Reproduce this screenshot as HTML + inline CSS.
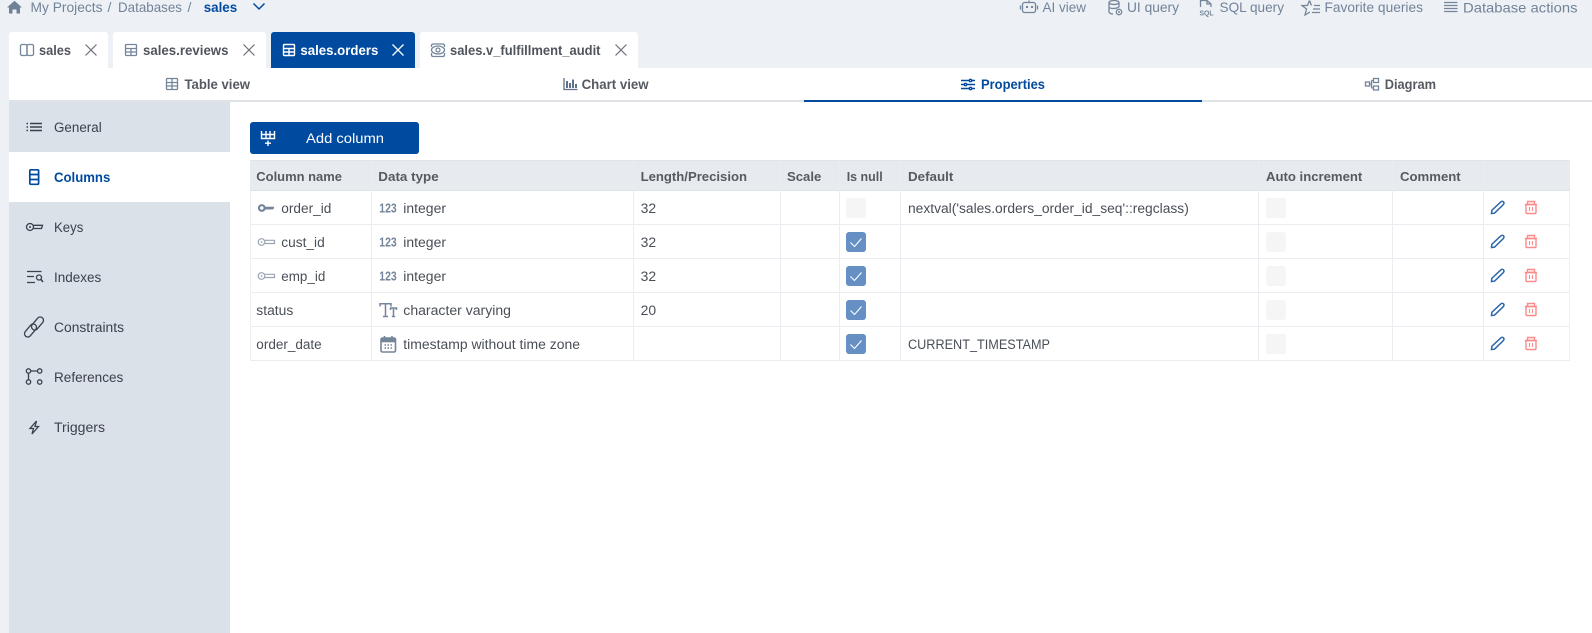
<!DOCTYPE html>
<html lang="en"><head><meta charset="utf-8"><title>sales.orders</title>
<style>
html,body{margin:0;padding:0;background:#fff;width:1592px;height:633px;overflow:hidden}
svg{display:block}
text{font-family:"Liberation Sans",sans-serif;font-size:13.5px;fill:#40454d}
.top{font-size:14px;fill:#728399}
.tab{font-size:13.5px;font-weight:700;fill:#50555d;stroke:none}
.sub{font-size:13.5px;font-weight:700;fill:#555a62}
.side{font-size:13.5px;fill:#3b414b}
.th{font-size:13px;font-weight:700;fill:#565b63}
.td{font-size:13.5px;fill:#4a4f57}
.n{font-size:12.5px;font-weight:700;fill:#74859a}
.ic{fill:none;stroke:#74859a;stroke-width:1.3}
.bl{fill:none;stroke:#2c68ad;stroke-width:1.5}
.rd{fill:none;stroke:#fb8a8a;stroke-width:1.4}
.gk{fill:none;stroke:#9aa5b3;stroke-width:1.2}
.ck{fill:none;stroke:#fff;stroke-width:1.1}
.sd{fill:none;stroke:#3b414b;stroke-width:1.3}
</style></head><body>
<svg width="1592" height="633" viewBox="0 0 1592 633" xmlns="http://www.w3.org/2000/svg">
<rect width="1592" height="633" fill="#fff"/>
<rect width="1592" height="68" fill="#edf1f5"/>
<rect y="68" width="9" height="565" fill="#edf1f5"/>

<!-- breadcrumb -->
<path d="M7 7.500 14.500 .8 22 7.500H20V13.500H16.500V9.500H12.500V13.500H9V7.500Z" fill="#6f8197"/>
<text class="top" x="30.500" y="12" textLength="72" lengthAdjust="spacingAndGlyphs">My Projects</text>
<text class="top" x="107.500" y="12">/</text>
<text class="top" x="118" y="12" textLength="64" lengthAdjust="spacingAndGlyphs">Databases</text>
<text class="top" x="187.500" y="12">/</text>
<text x="203.700" y="12" textLength="33.500" lengthAdjust="spacingAndGlyphs" style="font-size:14px;font-weight:700;fill:#004a9f">sales</text>
<path d="M253.500 3.500 259 9 264.500 3.500" fill="none" stroke="#004a9f" stroke-width="1.500"/>

<!-- top right -->
<g class="ic">
<rect x="1022.500" y="2.500" width="13" height="10" rx="2"/><path d="M1029 2.500V.5M1020.500 5.500V9.500M1037.500 5.500V9.500"/>
</g>
<rect x="1026" y="6" width="2" height="2" fill="#74859a"/><rect x="1031" y="6" width="2" height="2" fill="#74859a"/>
<text class="top" x="1042.500" y="12" textLength="43.500" lengthAdjust="spacingAndGlyphs">AI view</text>
<g class="ic">
<ellipse cx="1114" cy="2.500" rx="5" ry="2"/><path d="M1109 2.500V12C1109 13 1111 14 1113 14M1119 2.500V7M1109 7C1110 9 1116 9 1119 7"/>
<circle cx="1119" cy="12" r="2.700"/>
</g>
<circle cx="1119" cy="12" r="1" fill="#74859a"/>
<text class="top" x="1127" y="12" textLength="52" lengthAdjust="spacingAndGlyphs">UI query</text>
<path class="ic" d="M1200.500 7V.5H1207L1211 4V7M1207 .5V4H1211"/>
<text x="1199.500" y="15.500" textLength="14" lengthAdjust="spacingAndGlyphs" style="font-size:7px;font-weight:700;fill:#74859a">SQL</text>
<text class="top" x="1219.500" y="12" textLength="64.500" lengthAdjust="spacingAndGlyphs">SQL query</text>
<path class="ic" d="M1309.500 .5 1311.500 5.500M1309.500 .5 1307.500 5.500H1302L1306.500 9 1305 15 1310 12M1314 5.500H1320M1313 9H1320M1312 12.500H1320"/>
<text class="top" x="1324.500" y="12" textLength="98.500" lengthAdjust="spacingAndGlyphs">Favorite queries</text>
<path class="ic" d="M1444 2.500H1457.500M1444 5.500H1457.500M1444 8.500H1457.500M1444 11.500H1457.500"/>
<text class="top" x="1463" y="12.500" textLength="114.500" lengthAdjust="spacingAndGlyphs">Database actions</text>

<!-- tabs -->
<path d="M9 68V35a3 3 0 0 1 3-3H105a3 3 0 0 1 3 3V68Z" fill="#fff"/>
<path d="M113 68V35a3 3 0 0 1 3-3H263a3 3 0 0 1 3 3V68Z" fill="#fff"/>
<path d="M271 68V35a3 3 0 0 1 3-3H412a3 3 0 0 1 3 3V68Z" fill="#004a9f"/>
<path d="M420 68V35a3 3 0 0 1 3-3H635a3 3 0 0 1 3 3V68Z" fill="#fff"/>

<g class="ic"><rect x="20.500" y="44.500" width="6.500" height="11" rx="1.500"/><rect x="27" y="44.500" width="6.500" height="11" rx="1.500"/></g>
<text class="tab" x="39" y="55" textLength="32" lengthAdjust="spacingAndGlyphs">sales</text>
<path d="M85.500 44.500 96.500 55.500M96.500 44.500 85.500 55.500" stroke="#6a6f76" stroke-width="1.200"/>

<g class="ic"><rect x="125.500" y="44.500" width="11" height="11" rx="1"/><path d="M125.500 48.500H136.500M125.500 52H136.500M131 48.500V55.500"/></g>
<text class="tab" x="143" y="55" textLength="85.500" lengthAdjust="spacingAndGlyphs">sales.reviews</text>
<path d="M243.500 44.500 254.500 55.500M254.500 44.500 243.500 55.500" stroke="#6a6f76" stroke-width="1.200"/>

<g fill="none" stroke="#fff" stroke-width="1.400"><rect x="283.500" y="44.500" width="11" height="11" rx="1"/><path d="M283.500 48.500H294.500M283.500 52H294.500M289 48.500V55.500"/></g>
<text class="tab" x="300.400" y="55" textLength="78" lengthAdjust="spacingAndGlyphs" style="fill:#fff">sales.orders</text>
<path d="M392.500 44.500 403.500 55.500M403.500 44.500 392.500 55.500" stroke="#fff" stroke-width="1.300"/>

<g class="ic"><path d="M431.500 47V45.500C431.500 44.500 432.500 44 433.500 44H442.500C443.500 44 444.500 44.500 444.500 45.500V47M431.500 53V55C431.500 56 432.500 56.500 433.500 56.500H442.500C443.500 56.500 444.500 56 444.500 55V53"/><ellipse cx="438" cy="50" rx="6.500" ry="4"/><circle cx="438" cy="50" r="2"/></g>
<text class="tab" x="450" y="55" textLength="150.500" lengthAdjust="spacingAndGlyphs">sales.v_fulfillment_audit</text>
<path d="M615.500 44.500 626.500 55.500M626.500 44.500 615.500 55.500" stroke="#6a6f76" stroke-width="1.200"/>

<!-- sub nav -->
<rect x="9" y="100" width="1583" height="2" fill="#dfe2e7"/>
<rect x="804" y="100" width="398" height="2" fill="#004a9f"/>
<g class="ic"><rect x="166.500" y="78.500" width="11" height="11" rx="1"/><path d="M166.500 82.500H177.500M166.500 86H177.500M172 78.500V89.500"/></g>
<text class="sub" x="184.500" y="89" textLength="65.500" lengthAdjust="spacingAndGlyphs">Table view</text>
<path d="M564 78V89.500H577.500" fill="none" stroke="#5f7189" stroke-width="1.300"/>
<path d="M567 81V88M570 83V88M573 79.500V88M576 84V88" fill="none" stroke="#5f7189" stroke-width="2"/>
<text class="sub" x="581.600" y="89" textLength="67" lengthAdjust="spacingAndGlyphs">Chart view</text>
<g fill="none" stroke="#004a9f" stroke-width="1.400"><path d="M961 80.500H969M972 80.500H975M961 84.500H964M967 84.500H975M961 88.500H969M972 88.500H975"/><circle cx="970.500" cy="80.500" r="1.200"/><circle cx="965.500" cy="84.500" r="1.200"/><circle cx="970.500" cy="88.500" r="1.200"/></g>
<text x="981" y="89" textLength="64" lengthAdjust="spacingAndGlyphs" style="font-size:13.5px;font-weight:700;fill:#004a9f">Properties</text>
<g class="ic"><rect x="1365.500" y="82" width="4" height="4"/><rect x="1373.500" y="78.500" width="5" height="4"/><rect x="1373.500" y="86" width="5" height="4"/><path d="M1369.500 84H1371.500M1371.500 80.500V88M1371.500 80.500H1373.500M1371.500 88H1373.500"/></g>
<text class="sub" x="1384.700" y="89" textLength="51.300" lengthAdjust="spacingAndGlyphs">Diagram</text>

<!-- sidebar -->
<rect x="9" y="102" width="221" height="531" fill="#dbe1e8"/>
<rect x="9" y="152" width="221" height="50" fill="#fff"/>
<path d="M26.500 123.500H28M30 123.500H42M26.500 127H28M30 127H42M26.500 130.500H28M30 130.500H42" fill="none" stroke="#3b414b" stroke-width="1.600"/>
<text class="side" x="54" y="132" textLength="47.700" lengthAdjust="spacingAndGlyphs">General</text>
<g fill="none" stroke="#004a9f" stroke-width="1.700"><rect x="29.800" y="169.800" width="8.800" height="14.500" rx="1"/><path d="M29.800 174.500H38.600M29.800 179.500H38.600"/></g>
<text x="54" y="182" textLength="56.300" lengthAdjust="spacingAndGlyphs" style="font-size:13.5px;font-weight:700;fill:#004a9f">Columns</text>
<g class="sd"><circle cx="30" cy="227" r="3.500"/><path d="M33.500 225.300H42.500L41.500 228.500H33.500"/></g><circle cx="30" cy="227" r="1" fill="#3b414b"/>
<text class="side" x="54" y="232" textLength="29.300" lengthAdjust="spacingAndGlyphs">Keys</text>
<g class="sd"><path d="M27 271.500H41.500M27 276.500H34M27 282.500H35"/><circle cx="39" cy="277.500" r="2.500"/><path d="M41 279.500 43 282" stroke-width="1.600"/></g>
<text class="side" x="54" y="282" textLength="47.300" lengthAdjust="spacingAndGlyphs">Indexes</text>
<g class="sd"><rect x="-7.500" y="-3.300" width="15" height="6.600" rx="3.300" transform="translate(30.500 330.500) rotate(-50)"/><rect x="-7.500" y="-3.300" width="15" height="6.600" rx="3.300" transform="translate(37.500 323.500) rotate(-50)"/></g>
<text class="side" x="54" y="332" textLength="70" lengthAdjust="spacingAndGlyphs">Constraints</text>
<g class="sd"><circle cx="28.500" cy="371" r="2.200"/><circle cx="39.700" cy="371" r="2.200"/><circle cx="28.500" cy="382" r="2.200"/><circle cx="39.700" cy="382" r="2.200"/><path d="M30.700 371H37.500M28.500 373.200V379.800"/></g>
<text class="side" x="54" y="382" textLength="69.300" lengthAdjust="spacingAndGlyphs">References</text>
<path class="sd" d="M36.500 421 30 428.500H33.500L32 434 38.500 426.500H35Z" style="fill:none"/>
<text class="side" x="54" y="432" textLength="51" lengthAdjust="spacingAndGlyphs">Triggers</text>

<!-- add column -->
<rect x="250" y="122" width="169" height="32" rx="3" fill="#004a9f"/>
<path d="M261.500 131V138.500H274.500V131M261.500 134.500H274.500M266 131V138.500M270 131V138.500M268 140.500V146M265 143.200H271" fill="none" stroke="#fff" stroke-width="1.400"/>
<text x="306" y="143" textLength="78" lengthAdjust="spacingAndGlyphs" style="font-size:14px;fill:#fff;font-weight:400">Add column</text>

<!-- table -->
<rect x="250" y="160" width="1320" height="31" fill="#e7eaee"/>
<g fill="#e9ecf0">
<rect x="250" y="224" width="1320" height="1"/><rect x="250" y="258" width="1320" height="1"/><rect x="250" y="292" width="1320" height="1"/><rect x="250" y="326" width="1320" height="1"/><rect x="250" y="360" width="1320" height="1"/>
</g>
<rect x="250" y="160" width="1320" height="1" fill="#e0e4e9"/><rect x="250" y="190" width="1320" height="1" fill="#e0e4e9"/>
<g fill="#e9ecf0">
<rect x="371" y="160" width="1" height="201"/><rect x="633" y="160" width="1" height="201"/><rect x="780" y="160" width="1" height="201"/><rect x="839" y="160" width="1" height="201"/><rect x="900" y="160" width="1" height="201"/><rect x="1258" y="160" width="1" height="201"/><rect x="1392" y="160" width="1" height="201"/><rect x="1483" y="160" width="1" height="201"/>
</g>
<rect x="250" y="191" width="1" height="170" fill="#eef0f3"/><rect x="1569" y="191" width="1" height="170" fill="#eef0f3"/>
<text class="th" x="256.300" y="181" textLength="85.700" lengthAdjust="spacingAndGlyphs">Column name</text>
<text class="th" x="378.300" y="181" textLength="60.400" lengthAdjust="spacingAndGlyphs">Data type</text>
<text class="th" x="640.600" y="181" textLength="106.400" lengthAdjust="spacingAndGlyphs">Length/Precision</text>
<text class="th" x="787" y="181" textLength="34.300" lengthAdjust="spacingAndGlyphs">Scale</text>
<text class="th" x="846.700" y="181" textLength="36" lengthAdjust="spacingAndGlyphs">Is null</text>
<text class="th" x="908" y="181" textLength="45.300" lengthAdjust="spacingAndGlyphs">Default</text>
<text class="th" x="1266" y="181" textLength="96.300" lengthAdjust="spacingAndGlyphs">Auto increment</text>
<text class="th" x="1400" y="181" textLength="60.700" lengthAdjust="spacingAndGlyphs">Comment</text>

<!-- row 1 -->
<circle cx="261.800" cy="208" r="2.800" fill="none" stroke="#74859a" stroke-width="2.200"/><path d="M265 206.800H274V208.500L272.500 209.500H265Z" fill="#74859a"/>
<text class="td" x="281.300" y="213" textLength="50" lengthAdjust="spacingAndGlyphs">order_id</text>
<text class="n" x="379.300" y="212.700" textLength="17.400" lengthAdjust="spacingAndGlyphs">123</text>
<text class="td" x="403.300" y="213" textLength="42.700" lengthAdjust="spacingAndGlyphs">integer</text>
<text class="td" x="640.600" y="213" textLength="15.500" lengthAdjust="spacingAndGlyphs">32</text>
<rect x="846" y="198" width="20" height="20" rx="3" fill="#f5f5f5"/>
<text class="td" x="908" y="213" textLength="280.800" lengthAdjust="spacingAndGlyphs">nextval('sales.orders_order_id_seq'::regclass)</text>
<rect x="1266" y="198" width="20" height="20" rx="3" fill="#f5f5f5"/>

<!-- row 2 -->
<g class="gk"><circle cx="261.500" cy="242" r="3.300"/><path d="M264.800 240.300H274.500V243.500H264.800"/></g><circle cx="261.500" cy="242" r=".9" fill="#9aa5b3"/>
<text class="td" x="281.300" y="247" textLength="43.400" lengthAdjust="spacingAndGlyphs">cust_id</text>
<text class="n" x="379.300" y="246.700" textLength="17.400" lengthAdjust="spacingAndGlyphs">123</text>
<text class="td" x="403.300" y="247" textLength="42.700" lengthAdjust="spacingAndGlyphs">integer</text>
<text class="td" x="640.600" y="247" textLength="15.500" lengthAdjust="spacingAndGlyphs">32</text>
<rect x="846" y="232" width="20" height="20" rx="3" fill="#6690c4"/><path class="ck" d="M850.500 242.500 854.500 246.500 861.500 238.500"/>
<rect x="1266" y="232" width="20" height="20" rx="3" fill="#f5f5f5"/>

<!-- row 3 -->
<g class="gk"><circle cx="261.500" cy="276" r="3.300"/><path d="M264.800 274.300H274.500V277.500H264.800"/></g><circle cx="261.500" cy="276" r=".9" fill="#9aa5b3"/>
<text class="td" x="281.300" y="281" textLength="44" lengthAdjust="spacingAndGlyphs">emp_id</text>
<text class="n" x="379.300" y="280.700" textLength="17.400" lengthAdjust="spacingAndGlyphs">123</text>
<text class="td" x="403.300" y="281" textLength="42.700" lengthAdjust="spacingAndGlyphs">integer</text>
<text class="td" x="640.600" y="281" textLength="15.500" lengthAdjust="spacingAndGlyphs">32</text>
<rect x="846" y="266" width="20" height="20" rx="3" fill="#6690c4"/><path class="ck" d="M850.500 276.500 854.500 280.500 861.500 272.500"/>
<rect x="1266" y="266" width="20" height="20" rx="3" fill="#f5f5f5"/>

<!-- row 4 -->
<text class="td" x="256.300" y="315" textLength="37" lengthAdjust="spacingAndGlyphs">status</text>
<path d="M380 306.500V303.700H391V306.500M385.500 303.700V316.500M383 316.500H388M390.500 310V308H396.500V310M393.500 308V316.500M391.800 316.500H395.200" fill="none" stroke="#74859a" stroke-width="1.500"/>
<text class="td" x="403.300" y="315" textLength="107.700" lengthAdjust="spacingAndGlyphs">character varying</text>
<text class="td" x="640.600" y="315" textLength="15.500" lengthAdjust="spacingAndGlyphs">20</text>
<rect x="846" y="300" width="20" height="20" rx="3" fill="#6690c4"/><path class="ck" d="M850.500 310.500 854.500 314.500 861.500 306.500"/>
<rect x="1266" y="300" width="20" height="20" rx="3" fill="#f5f5f5"/>

<!-- row 5 -->
<text class="td" x="256.300" y="349" textLength="65.400" lengthAdjust="spacingAndGlyphs">order_date</text>
<rect x="381" y="338" width="14.500" height="4.300" fill="#74859a"/>
<g fill="none" stroke="#74859a" stroke-width="1.600"><rect x="381" y="338" width="14.500" height="14" rx="1.500"/><path d="M384.500 336V339.500M392 336V339.500"/></g>
<path d="M384.500 345H386M387.500 345H389M390.500 345H392M384.500 348H386M387.500 348H389M390.500 348H392" stroke="#74859a" stroke-width="1.400"/>
<text class="td" x="403.300" y="349" textLength="176.700" lengthAdjust="spacingAndGlyphs">timestamp without time zone</text>
<rect x="846" y="334" width="20" height="20" rx="3" fill="#6690c4"/><path class="ck" d="M850.500 344.500 854.500 348.500 861.500 340.500"/>
<text class="td" x="908" y="349" textLength="142" lengthAdjust="spacingAndGlyphs">CURRENT_TIMESTAMP</text>
<rect x="1266" y="334" width="20" height="20" rx="3" fill="#f5f5f5"/>

<!-- actions -->
<g class="bl">
<path d="M1491.500 213.500 1491.800 210.300 1500.800 201.900C1501.800 201 1503 201.200 1503.600 202C1504.200 202.800 1504 203.800 1503.200 204.700L1494.500 213.200Z"/>
<path d="M1491.500 247.500 1491.800 244.300 1500.800 235.900C1501.800 235 1503 235.200 1503.600 236C1504.200 236.800 1504 237.800 1503.200 238.700L1494.500 247.200Z"/>
<path d="M1491.500 281.500 1491.800 278.300 1500.800 269.900C1501.800 269 1503 269.200 1503.600 270C1504.200 270.800 1504 271.800 1503.200 272.700L1494.500 281.200Z"/>
<path d="M1491.500 315.500 1491.800 312.300 1500.800 303.900C1501.800 303 1503 303.200 1503.600 304C1504.200 304.800 1504 305.800 1503.200 306.700L1494.500 315.200Z"/>
<path d="M1491.500 349.500 1491.800 346.300 1500.800 337.900C1501.800 337 1503 337.200 1503.600 338C1504.200 338.800 1504 339.800 1503.200 340.700L1494.500 349.200Z"/>
</g>
<g class="rd">
<path d="M1524.800 204.500H1537M1527.500 204.500V201.500H1534.500V204.500"/><rect x="1526" y="204.500" width="10" height="9" rx="1"/><path d="M1529.500 207V211M1532.500 207V211" stroke-width="1.100"/>
<path d="M1524.800 238.500H1537M1527.500 238.500V235.500H1534.500V238.500"/><rect x="1526" y="238.500" width="10" height="9" rx="1"/><path d="M1529.500 241V245M1532.500 241V245" stroke-width="1.100"/>
<path d="M1524.800 272.500H1537M1527.500 272.500V269.500H1534.500V272.500"/><rect x="1526" y="272.500" width="10" height="9" rx="1"/><path d="M1529.500 275V279M1532.500 275V279" stroke-width="1.100"/>
<path d="M1524.800 306.500H1537M1527.500 306.500V303.500H1534.500V306.500"/><rect x="1526" y="306.500" width="10" height="9" rx="1"/><path d="M1529.500 309V313M1532.500 309V313" stroke-width="1.100"/>
<path d="M1524.800 340.500H1537M1527.500 340.500V337.500H1534.500V340.500"/><rect x="1526" y="340.500" width="10" height="9" rx="1"/><path d="M1529.500 343V347M1532.500 343V347" stroke-width="1.100"/>
</g>
</svg>
</body></html>
